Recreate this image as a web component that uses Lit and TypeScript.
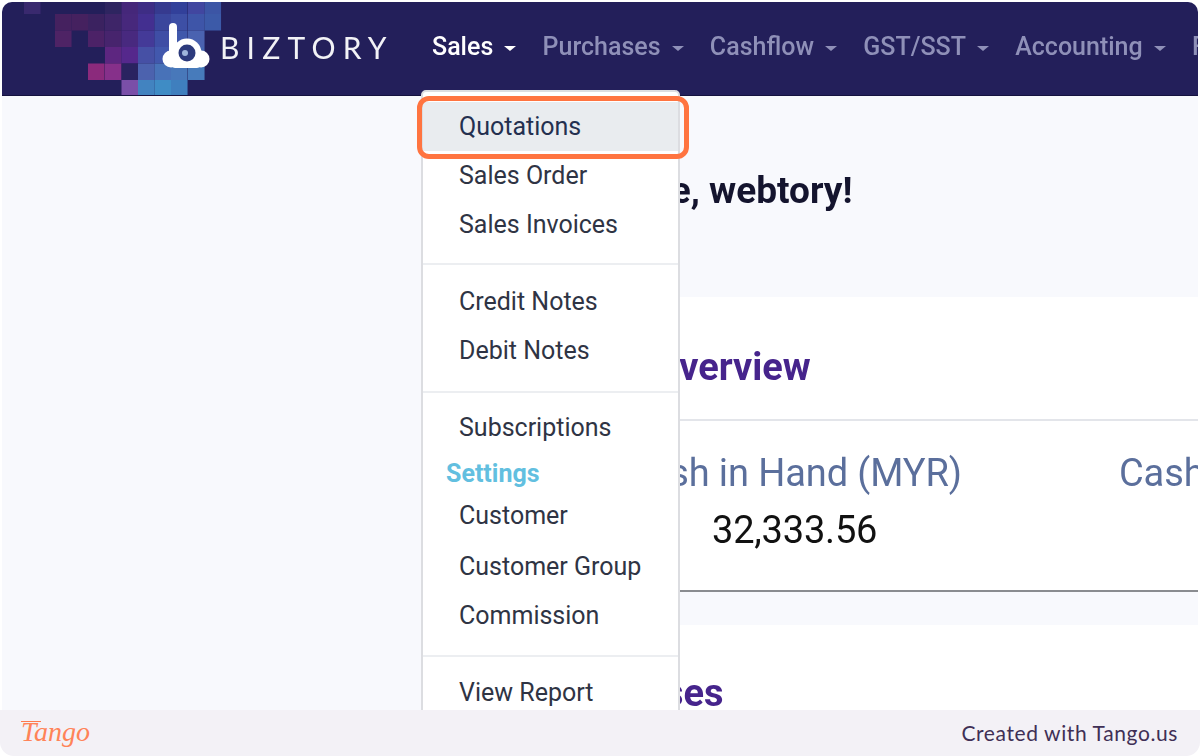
import { LitElement, html, css, svg } from "lit";
import { customElement } from "lit/decorators.js";

const COL = 16.55;
const ROW = 16.5;
// [row, x, colour] : mosaic cells of the header artwork
const cells: [number, number, string][] = [
  [0, 24, "#39296e"], [0, 105, "#2e2560"], [0, 121.5, "#45277a"], [0, 138, "#3e2d85"], [0, 154.5, "#363a8f"], [0, 171, "#32409a"], [0, 188, "#4146a0"], [0, 204.5, "#3c55a5"],
  [1, 55, "#45215f"], [1, 71.5, "#45215f"], [1, 88, "#3b2260"], [1, 105, "#3e2568"], [1, 121.5, "#47287c"], [1, 138, "#432f90"], [1, 154.5, "#3a469c"], [1, 171, "#3d4fa5"], [1, 188, "#3e55a8"], [1, 204.5, "#3c5aa8"],
  [2, 55, "#4e2365"], [2, 88, "#4c2267"], [2, 105, "#47246d"], [2, 121.5, "#48297f"], [2, 138, "#443a98"], [2, 154.5, "#3f4ea5"], [2, 171, "#4058ab"], [2, 188, "#4a62b0"],
  [3, 105, "#5d2680"], [3, 121.5, "#55288c"], [3, 138, "#4650a5"], [3, 154.5, "#4258ad"], [3, 171, "#4460b0"], [3, 188, "#4666b0"],
  [4, 88, "#8b2a7c"], [4, 105, "#86308a"], [4, 121.5, "#2a2360"], [4, 138, "#4c62ae"], [4, 154.5, "#4872b8"], [4, 171, "#4878ba"], [4, 188, "#477bbb"],
  [5, 121.5, "#7a4fa8"], [5, 138, "#4283c0"], [5, 154.5, "#3f8cc5"], [5, 171, "#3f7fbe"],
];

@customElement("app-root")
export class AppRoot extends LitElement {
  static styles = css`
    :host { display: block; position: relative; width: 1200px; height: 756px; overflow: hidden; background: #fff; font-family: Roboto, "Liberation Sans", sans-serif; }
    * { box-sizing: border-box; }
    .frame { height: 756px; padding: 2px 2px 0; display: flex; flex-direction: column; }
    .screen { flex: 1; min-height: 0; display: flex; flex-direction: column; overflow: hidden; border-radius: 10px 10px 0 0; background: #f8f9fd; position: relative; filter: blur(0.5px); }
    .header { height: 94px; flex: none; padding-bottom: 4px; background: #231f5a; position: relative; display: flex; align-items: center; border-bottom: 1px solid #15123f; overflow: hidden; }
    .mosaic { position: absolute; left: -2px; top: -2px; }
    .brand { position: relative; display: flex; align-items: center; width: 430px; padding-left: 160px; flex: none; }
    .brand svg { display: block; flex: none; }
    .brand span { font-family: Lato, sans-serif; color: #f2f2f6; font-size: 30px; font-weight: 400; letter-spacing: 7.2px; margin-left: 10px; line-height: 1; }
    .nav { display: flex; align-items: center; gap: 26.3px; white-space: nowrap; position: relative; }
    .nav-item { display: flex; align-items: center; gap: 11px; color: #8f90b8; font-size: 25px; font-weight: 500; }
    .nav-item.active { color: #fff; }
    .caret { width: 0; height: 0; border-left: 6px solid transparent; border-right: 6px solid transparent; border-top: 5px solid currentColor; margin-top: 3px; }
    .main { flex: 1; min-height: 0; padding: 0 0 0 535px; }
    .welcome { height: 201px; padding-top: 73px; margin: 0; font-size: 37px; font-weight: 700; color: #14142e; line-height: 44px; white-space: nowrap; }
    .card { background: #fff; margin-right: -2px; }
    .card-a { height: 295px; border-bottom: 2px solid #8a8c90; }
    .card-title { height: 124px; padding: 48px 0 0 116px; margin: 0; border-bottom: 2px solid #e3e5ea; font-size: 38px; font-weight: 700; color: #46248c; line-height: 44px; }
    .stats { display: flex; padding: 30px 0 0 87px; gap: 157px; white-space: nowrap; }
    .stat-label { font-size: 38px; color: #5b6f9c; line-height: 44px; letter-spacing: -0.1px; }
    .stat-value { font-size: 38px; color: #111; line-height: 44px; padding: 13px 0 0 88px; letter-spacing: -0.2px; }
    .card-b { margin-top: 33px; height: 100px; padding: 46px 0 0 23px; }
    .card-b h2 { margin: 0; font-size: 38px; font-weight: 700; color: #46248c; line-height: 44px; }
    .menu { position: absolute; left: 419px; top: 88px; width: 259px; height: 640px; padding-top: 10px; background: #fff; border: 2px solid #dcdde1; border-radius: 5px; color: #2f3444; font-size: 25px; }
    .menu-item { height: 49px; display: flex; align-items: center; padding-left: 36px; white-space: nowrap; }
    .menu-item.current { background: #e9ecef; color: #24304f; }
    .menu-item.tight { height: 42px; margin-bottom: 5.5px; }
    .menu-head { height: 42px; display: flex; align-items: center; padding-left: 23px; color: #62bfe0; font-weight: 700; font-size: 25px; }
    .divider { height: 2px; background: #eceef1; }
    .gap-a { margin: 14px 0 12px; }
    .gap-b { margin: 16px 0 10px; }
    .gap-c { margin: 15px 0 11px; }
    .highlight { position: absolute; left: 417px; top: 96px; width: 272px; height: 63px; border: 5px solid #ff7440; border-radius: 12px; }
    .footer { position: relative; height: 46px; flex: none; margin: 0 -2px; padding: 0 22px 2px 21px; background: #f3f1f6; border-radius: 0 0 14px 14px; display: flex; align-items: center; justify-content: space-between; }
    .tango { position: relative; font-family: "Liberation Serif", serif; font-style: italic; font-size: 28px; color: #ff8358; font-weight: 400; line-height: 1; }
    .tango::before { content: ""; position: absolute; left: 0; top: 3px; width: 20px; height: 1px; background: #ff7a4c; }
    .credit { font-family: Lato, sans-serif; font-size: 21px; color: #3f2f55; letter-spacing: 0.6px; }
  `;

  private nav = ["Sales", "Purchases", "Cashflow", "GST/SST", "Accounting", "Fixed Assets"];

  render() {
    return html`
      <div class="frame">
        <div class="screen">
          <div class="header">
            <svg class="mosaic" width="240" height="98" viewBox="0 0 240 98">
              ${cells.map(([r, x, c]) => svg`<rect x=${x} y=${r === 0 ? 0 : r * ROW - 2.5} width=${COL} height=${r === 0 ? 14 : ROW} fill=${c}></rect>`)}
            </svg>
            <div class="brand">
              <svg width="48" height="47" viewBox="0 0 48 47" aria-label="Biztory logo">
                <circle cx="9" cy="36" r="8.5" fill="#fff"/>
                <circle cx="39" cy="36" r="8.5" fill="#fff"/>
                <rect x="8" y="34" width="32" height="11" rx="5" fill="#fff"/>
                <path d="M11 4v26" stroke="#fff" stroke-width="8" stroke-linecap="round" fill="none"/>
                <circle cx="25" cy="30" r="14.5" fill="#fff"/>
                <circle cx="25" cy="30" r="8.5" fill="#2c3a7c"/>
                <circle cx="23" cy="30" r="3" fill="#9fb6dc"/>
              </svg>
              <span>BIZTORY</span>
            </div>
            <div class="nav">
              ${this.nav.map((n, i) => html`<div class="nav-item ${i === 0 ? "active" : ""}">${n}<i class="caret"></i></div>`)}
            </div>
          </div>
          <div class="main">
            <h1 class="welcome">Welcome, webtory!</h1>
            <section class="card card-a">
              <h2 class="card-title">Overview</h2>
              <div class="stats">
                <div><div class="stat-label">Cash in Hand (MYR)</div><div class="stat-value">32,333.56</div></div>
                <div><div class="stat-label">Cash</div></div>
              </div>
            </section>
            <section class="card card-b"><h2>Expenses</h2></section>
          </div>
          <nav class="menu">
            <div class="menu-item current">Quotations</div>
            <div class="menu-item">Sales Order</div>
            <div class="menu-item">Sales Invoices</div>
            <div class="divider gap-a"></div>
            <div class="menu-item">Credit Notes</div>
            <div class="menu-item">Debit Notes</div>
            <div class="divider gap-b"></div>
            <div class="menu-item">Subscriptions</div>
            <div class="menu-head">Settings</div>
            <div class="menu-item tight">Customer</div>
            <div class="menu-item">Customer Group</div>
            <div class="menu-item">Commission</div>
            <div class="divider gap-c"></div>
            <div class="menu-item">View Report</div>
          </nav>
        </div>
        <footer class="footer">
          <span class="tango">Tango</span>
          <span class="credit">Created with Tango.us</span>
        </footer>
      </div>
      <div class="highlight"></div>
    `;
  }
}
